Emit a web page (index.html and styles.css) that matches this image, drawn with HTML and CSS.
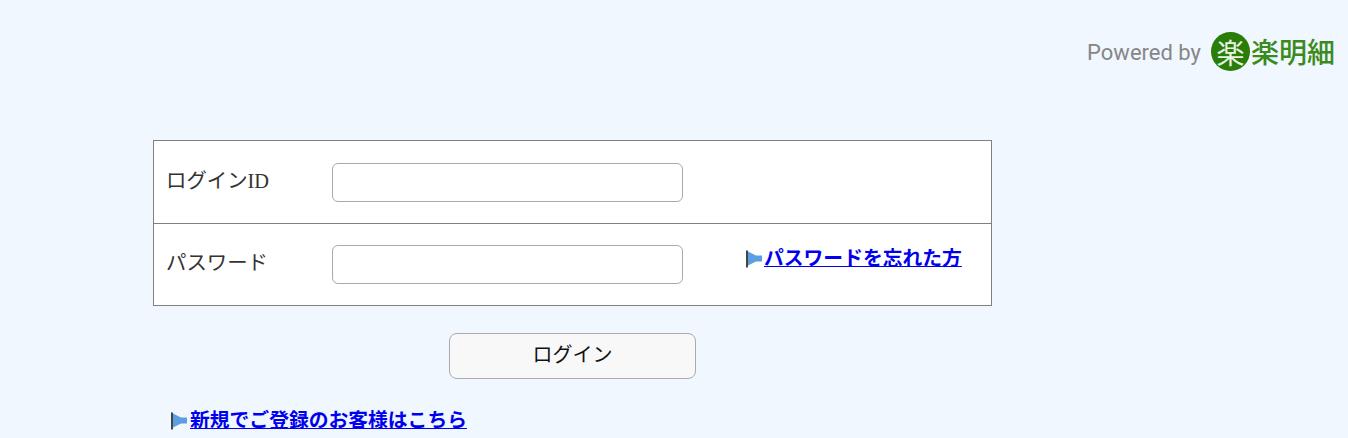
FILE: index.html
```html
<!DOCTYPE html>
<html lang="ja">
<head>
    <meta charset="UTF-8">
    <meta name="viewport" content="width=device-width, initial-scale=1.0">
    <title>ログイン</title>
    <link rel="stylesheet" href="styles.css">
</head>
<body>
    <header class="powered">
        <span class="powered-by">Powered by</span>
        <span class="logo-mark">楽</span>
        <span class="logo-name">楽明細</span>
    </header>

    <main class="login">
        <form class="login-form">
            <div class="login-box">
                <div class="login-row">
                    <label class="login-label" for="loginId">ログインID</label>
                    <input class="login-input" type="text" id="loginId">
                </div>
                <div class="login-row">
                    <label class="login-label" for="password">パスワード</label>
                    <input class="login-input" type="password" id="password">
                    <a class="arrow-link forgot-link" href="#">
                        <svg class="arrow-icon" width="17" height="18" viewBox="0 0 17 18"><rect x="0" y="0.5" width="2" height="17" fill="#444"/><path d="M2 1.5 L10 5.5 H16 V11.5 H10 L2 15.5 Z" fill="#5b9fe0"/></svg>
                        <span>パスワードを忘れた方</span>
                    </a>
                </div>
            </div>

            <div class="button-row">
                <button class="login-button" type="button">ログイン</button>
            </div>

            <a class="arrow-link signup-link" href="#">
                <svg class="arrow-icon" width="17" height="18" viewBox="0 0 17 18"><rect x="0" y="0.5" width="2" height="17" fill="#444"/><path d="M2 1.5 L10 5.5 H16 V11.5 H10 L2 15.5 Z" fill="#5b9fe0"/></svg>
                <span>新規でご登録のお客様はこちら</span>
            </a>
        </form>
    </main>
</body>
</html>
```

FILE: styles.css
```css
html, body {
    height: 100%;
    overflow: hidden;
}

body {
    font-family: "Liberation Serif", "Noto Sans CJK JP", serif;
    margin: 0;
    padding: 0;
    background-color: #f0f7ff;
    color: #333;
}

/* Logo at top right */
.powered {
    display: flex;
    justify-content: flex-end;
    align-items: center;
    height: 39px;
    padding: 32px 13px 0 0;
}

.powered-by {
    font-family: Roboto, sans-serif;
    font-size: 22px;
    color: #868686;
    margin-top: 1px;
    margin-right: 10px;
}

.logo-mark {
    display: flex;
    justify-content: center;
    align-items: center;
    width: 39px;
    height: 39px;
    border-radius: 50%;
    background-color: #2a7d08;
    color: #e8f3e2;
    font-family: "Noto Sans CJK JP", sans-serif;
    font-size: 28px;
}

.logo-name {
    font-family: "Noto Sans CJK JP", sans-serif;
    font-size: 28px;
    font-weight: 500;
    line-height: 39px;
    color: #3b8a1c;
    margin-left: 1px;
}

.login {
    padding: 69px 0 0 153px;
}

.login-form {
    width: 839px;
}

.login-box {
    background-color: white;
    border: 1px solid #808080;
}

.login-row {
    box-sizing: border-box;
    display: flex;
    align-items: center;
    height: 82px;
    padding-left: 12px;
}

.login-row + .login-row {
    border-top: 1px solid #808080;
}

.login-label {
    width: 166px;
    font-size: 20.4px;
    margin-top: -7px;
}

.login-input {
    box-sizing: border-box;
    width: 351px;
    height: 39px;
    padding: 0 8px;
    background-color: white;
    border: 1px solid #a9a9b0;
    border-radius: 6px;
}

.arrow-link {
    display: flex;
    align-items: center;
    font-size: 19.8px;
    font-weight: bold;
    color: #0000ee;
}

.arrow-icon {
    margin-top: 5px;
    margin-right: 1px;
}

.forgot-link {
    margin-left: 63px;
    margin-top: -16px;
}

.button-row {
    display: flex;
    justify-content: center;
    padding-top: 27px;
}

.login-button {
    width: 247px;
    height: 46px;
    padding-bottom: 7px;
    background-color: #f8f8f8;
    border: 1px solid #a9a9b0;
    border-radius: 8px;
    font-family: "Noto Sans CJK JP", sans-serif;
    font-size: 20px;
    color: #111;
}

.signup-link {
    margin: 25px 0 0 18px;
}

.signup-link .arrow-icon {
    margin-right: 2px;
}
```
